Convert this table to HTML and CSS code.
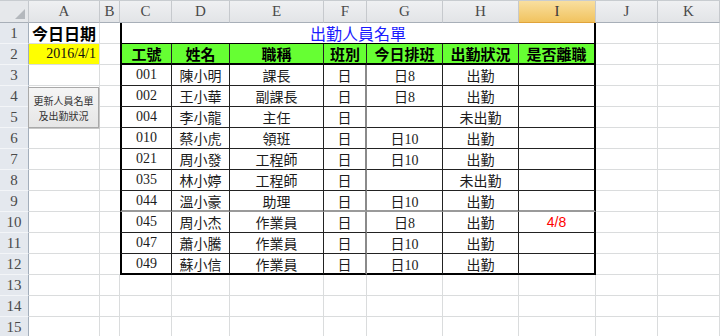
FILE: index.html
```html
<!DOCTYPE html>
<html lang="zh-Hant">
<head>
<meta charset="utf-8">
<link rel="stylesheet" href="styles.css">
</head>
<body>
<div class="sheet">
  <div class="corner"><svg class="tri" width="10" height="10" viewBox="0 0 10 10"><polygon points="10,0 10,10 0,10" fill="#b4b8bd"/></svg></div>
  <div class="ch">A</div><div class="ch">B</div><div class="ch">C</div><div class="ch">D</div><div class="ch">E</div><div class="ch">F</div><div class="ch">G</div><div class="ch">H</div><div class="ch sel">I</div><div class="ch">J</div><div class="ch">K</div>

  <div class="rh">1</div><div class="c a1">今日日期</div><div class="c bb"></div><div class="c title">出勤人員名單</div><div class="c"></div><div class="c"></div>

  <div class="rh">2</div><div class="c date">2016/4/1</div><div class="c bb"></div>
  <div class="t hd first">工號</div><div class="t hd">姓名</div><div class="t hd">職稱</div><div class="t hd">班別</div><div class="t hd">今日排班</div><div class="t hd">出勤狀況</div><div class="t hd last">是否離職</div>
  <div class="c"></div><div class="c"></div>

  <div class="rh">3</div><div class="c"></div><div class="c bb"></div>
  <div class="t first">001</div><div class="t">陳小明</div><div class="t">課長</div><div class="t gf">日</div><div class="t">日8</div><div class="t">出勤</div><div class="t last"></div>
  <div class="c"></div><div class="c"></div>

  <div class="rh">4</div><div class="c"></div><div class="c bb"></div>
  <div class="t first">002</div><div class="t">王小華</div><div class="t">副課長</div><div class="t gf">日</div><div class="t">日8</div><div class="t">出勤</div><div class="t last"></div>
  <div class="c"></div><div class="c"></div>

  <div class="rh">5</div><div class="c"></div><div class="c bb"></div>
  <div class="t first">004</div><div class="t">李小龍</div><div class="t">主任</div><div class="t gf">日</div><div class="t"></div><div class="t">未出勤</div><div class="t last"></div>
  <div class="c"></div><div class="c"></div>

  <div class="rh">6</div><div class="c"></div><div class="c bb"></div>
  <div class="t first">010</div><div class="t">蔡小虎</div><div class="t">領班</div><div class="t gf">日</div><div class="t">日10</div><div class="t">出勤</div><div class="t last"></div>
  <div class="c"></div><div class="c"></div>

  <div class="rh">7</div><div class="c"></div><div class="c bb"></div>
  <div class="t first">021</div><div class="t">周小發</div><div class="t">工程師</div><div class="t gf">日</div><div class="t">日10</div><div class="t">出勤</div><div class="t last"></div>
  <div class="c"></div><div class="c"></div>

  <div class="rh">8</div><div class="c"></div><div class="c bb"></div>
  <div class="t first">035</div><div class="t">林小婷</div><div class="t">工程師</div><div class="t gf">日</div><div class="t"></div><div class="t">未出勤</div><div class="t last"></div>
  <div class="c"></div><div class="c"></div>

  <div class="rh">9</div><div class="c"></div><div class="c bb"></div>
  <div class="t gb first">044</div><div class="t gb">溫小豪</div><div class="t gb">助理</div><div class="t gb gf">日</div><div class="t gb">日10</div><div class="t gb">出勤</div><div class="t gb last"></div>
  <div class="c"></div><div class="c"></div>

  <div class="rh">10</div><div class="c"></div><div class="c bb"></div>
  <div class="t first">045</div><div class="t">周小杰</div><div class="t">作業員</div><div class="t gf">日</div><div class="t">日8</div><div class="t">出勤</div><div class="t last red">4/8</div>
  <div class="c"></div><div class="c"></div>

  <div class="rh">11</div><div class="c"></div><div class="c bb"></div>
  <div class="t first">047</div><div class="t">蕭小騰</div><div class="t">作業員</div><div class="t gf">日</div><div class="t">日10</div><div class="t">出勤</div><div class="t last"></div>
  <div class="c"></div><div class="c"></div>

  <div class="rh">12</div><div class="c"></div><div class="c bb"></div>
  <div class="t first bottom">049</div><div class="t bottom">蘇小信</div><div class="t bottom">作業員</div><div class="t bottom gf">日</div><div class="t bottom">日10</div><div class="t bottom">出勤</div><div class="t last bottom"></div>
  <div class="c"></div><div class="c"></div>

  <div class="rh">13</div><div class="c"></div><div class="c"></div><div class="c"></div><div class="c"></div><div class="c"></div><div class="c"></div><div class="c"></div><div class="c"></div><div class="c"></div><div class="c"></div><div class="c"></div>
  <div class="rh">14</div><div class="c"></div><div class="c"></div><div class="c"></div><div class="c"></div><div class="c"></div><div class="c"></div><div class="c"></div><div class="c"></div><div class="c"></div><div class="c"></div><div class="c"></div>
  <div class="rh">15</div><div class="c"></div><div class="c"></div><div class="c"></div><div class="c"></div><div class="c"></div><div class="c"></div><div class="c"></div><div class="c"></div><div class="c"></div><div class="c"></div><div class="c"></div>

  <div class="btn"><span>更新人員名單</span><span>及出勤狀況</span></div>
</div>
</body>
</html>
```

FILE: styles.css
```css
* { box-sizing: border-box; }
html, body {
  margin: 0;
  padding: 0;
  background: #ffffff;
  overflow: hidden;
}
body {
  width: 720px;
  height: 336px;
  font-family: "Liberation Serif", "Noto Sans CJK TC", serif;
  color: #1a1a1a;
}
.sheet {
  position: relative;
  display: grid;
  grid-template-columns: 29px 71px 20px 52px 58px 94px 43px 76px 76px 77px 62px 62px;
  grid-template-rows: 22px repeat(15, 21px);
  width: 720px;
  border-top: 1px solid #c8ccd0;
}
.sheet > div {
  display: flex;
  align-items: center;
  justify-content: center;
  white-space: nowrap;
  overflow: hidden;
}
.corner {
  position: relative;
  background: #e6e8eb;
  border-right: 1px solid #c4c8cd;
  border-bottom: 1px solid #a8afb8;
  justify-content: flex-end !important;
  align-items: flex-end !important;
  padding: 0 3px 3px 0;
}
.ch {
  background: linear-gradient(#eff0f2, #e2e4e7);
  border-right: 1px solid #c6c9cd;
  border-bottom: 1px solid #a8afb8;
  font-size: 15px;
  color: #4a4a4a;
}
.ch.sel {
  background: linear-gradient(#f9df9f, #f1c35f);
  border-bottom: 1px solid #e0a33a;
  color: #3a3a3a;
}
.rh {
  background: #e4e8ee;
  border-right: 1px solid #a3aebb;
  border-bottom: 1px solid #f3f5f8;
  font-size: 15px;
  color: #4a4a4a;
}
.c {
  border-right: 1px solid #dadcdd;
  border-bottom: 1px solid #dadcdd;
}
.c.bb {
  border-right: none;
}
.a1 {
  justify-content: flex-start !important;
  padding-left: 3px;
  font-size: 16px;
  font-weight: bold;
  color: #000;
}
.date {
  background: #ffff00;
  justify-content: flex-end !important;
  padding-right: 3px;
  font-size: 14px;
  color: #111;
}
.title {
  grid-column: span 7;
  border-left: 2px solid #000;
  border-right: 2px solid #000;
  border-bottom: 1px solid #000;
  color: #1a1aff;
  font-size: 16px;
}
.t {
  border-right: 1px solid #222;
  border-bottom: 1px solid #222;
  font-size: 14px;
  color: #1c1c1c;
}
.t.first { border-left: 2px solid #000; }
.t.last { border-right: 2px solid #000; }
.t.bottom { border-bottom: 2px solid #000; }
.t.gf { border-right: 2px solid #8a8a8a; }
.t.gb { border-bottom: 2px solid #9a9a9a; }
.hd {
  background: #66ff33;
  font-weight: bold;
  font-size: 15px;
  color: #000;
  border-bottom: 2px solid #000;
}
.red {
  color: #ff0000;
  font-family: "Liberation Sans", sans-serif;
  font-size: 14px;
}
.btn {
  position: absolute;
  left: 28px;
  top: 86px;
  width: 71px;
  height: 41px;
  flex-direction: column;
  background: linear-gradient(#f5f5f5, #e6e6e6);
  border: 1px solid #a9a9a9;
  box-shadow: 1px 1px 0 #c8c8c8;
  font-family: "Noto Sans CJK TC", sans-serif;
  font-size: 10px;
  line-height: 15px;
  color: #333;
}
```
